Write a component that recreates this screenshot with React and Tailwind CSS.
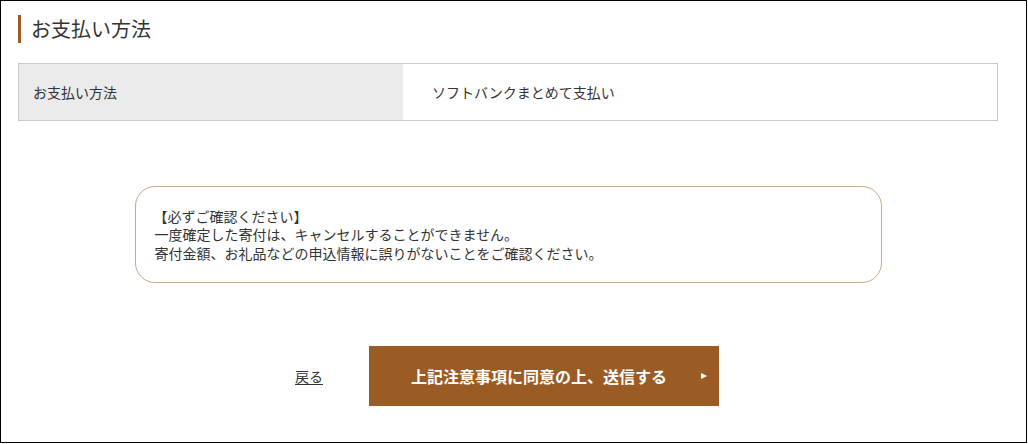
export default function App() {
  return (
    <div
      className="w-[1027px] h-[443px] border border-black bg-white text-[#333]"
      style={{ fontFamily: '"Noto Sans CJK JP", "Noto Sans", sans-serif' }}
    >
      <div className="w-[980px] ml-[17px]">
        {/* 見出し */}
        <h2 className="mt-[14px] h-[28px] border-l-[3px] border-[#9a5b24] pl-[10px] text-[20px] leading-[28px] font-normal text-[#333]">
          お支払い方法
        </h2>

        {/* 支払い方法テーブル */}
        <div className="mt-[20px] flex h-[58px] border border-[#cccccc]">
          <div className="w-[384px] shrink-0 bg-[#ebebeb] flex items-center pl-[14px] text-[14px]">
            お支払い方法
          </div>
          <div className="flex-1 flex items-center pl-[29px] text-[14px]">
            ソフトバンクまとめて支払い
          </div>
        </div>

        {/* 注意事項 */}
        <div className="mt-[65px] mx-auto w-[747px] h-[97px] border border-[#c9a884] rounded-[20px] flex flex-col justify-center pl-[19px] text-[14px] leading-[18.5px]">
          <p className="-ml-[1px]">【必ずご確認ください】</p>
          <p>一度確定した寄付は、キャンセルすることができません。</p>
          <p>寄付金額、お礼品などの申込情報に誤りがないことをご確認ください。</p>
        </div>

        {/* ボタン */}
        <div className="mt-[63px] flex items-center justify-center gap-[46px] -translate-x-[1px]">
          <a href="#" className="text-[14px] underline underline-offset-2 text-[#333]">
            戻る
          </a>
          <button className="relative w-[350px] h-[60px] bg-[#9a5b24] text-white text-[16px] font-bold flex items-center justify-center pr-[10px]">
            上記注意事項に同意の上、送信する
            <span className="absolute right-[12px] top-1/2 -translate-y-1/2 w-0 h-0 border-y-[3.5px] border-y-transparent border-l-[6px] border-l-white" />
          </button>
        </div>
      </div>
    </div>
  )
}
